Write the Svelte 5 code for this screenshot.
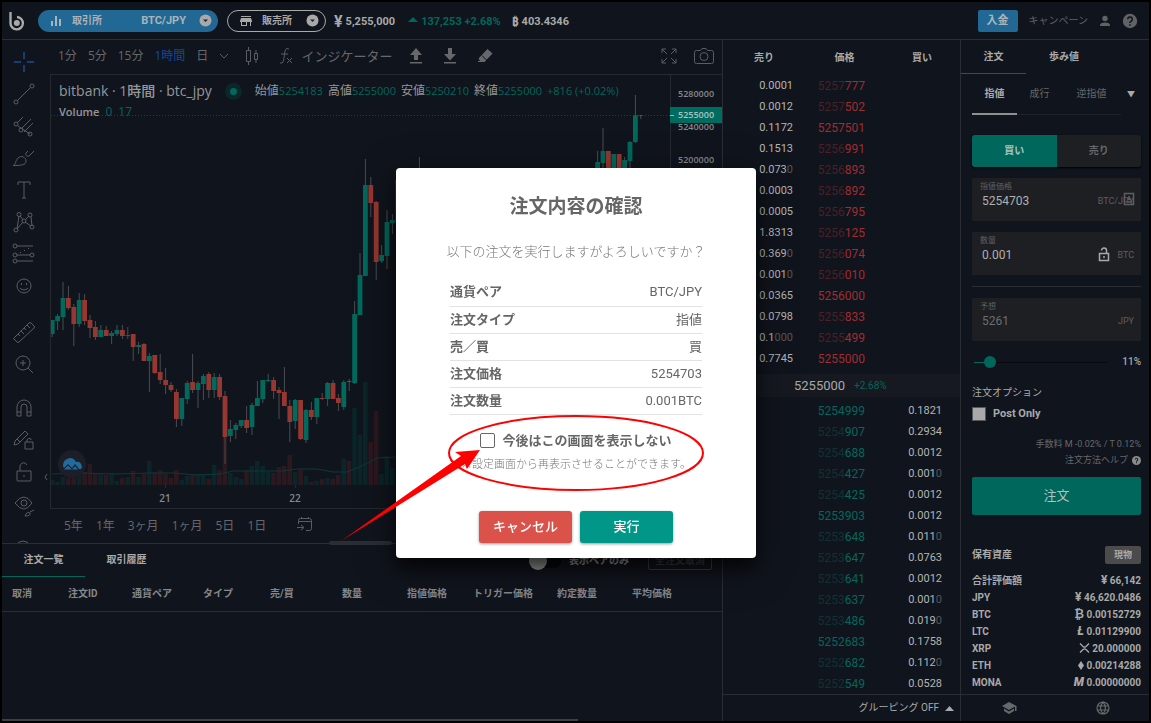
<script>
  // Candle: [body top, body bottom, high, low, direction]
  const candles = [
    [320,334,320,337,'g'],[316,321,314,330,'g'],[298,317,282,330,'g'],[298,308,286,310,'r'],[307,324,304,346,'r'],
    [300,324,293,327,'g'],[300,321,294,325,'r'],[320,328,315,338,'r'],[327,337,321,340,'r'],[330,337,325,337,'g'],
    [330,336,326,336,'r'],[333,336,331,344,'g'],[330,334,325,336,'g'],[330,336,325,339,'r'],[335,336,327,339,'g'],
    [334,347,334,361,'r'],[345,347,342,354,'g'],[344,361,343,361,'r'],[356,361,353,392,'g'],[355,373,355,374,'r'],
    [372,380,354,384,'r'],[380,385,368,394,'r'],[385,390,382,392,'r'],[392,419,389,427,'r'],[398,419,398,426,'g'],
    [383,399,381,404,'g'],[382,390,354,393,'r'],[383,390,381,408,'g'],[376,384,374,400,'g'],[374,390,372,398,'r'],
    [377,390,373,398,'g'],[377,397,374,400,'r'],[396,437,391,464,'r'],[429,436,420,442,'g'],[425,430,423,439,'g'],
    [420,426,420,428,'g'],[420,428,406,433,'r'],[405,427,403,435,'g'],[398,406,381,406,'g'],[380,399,380,403,'g'],
    [380,381,374,382,'g'],[380,391,377,399,'r'],[390,393,387,419,'r'],[392,406,367,406,'r'],[406,422,400,442,'r'],
    [400,421,399,429,'g'],[400,439,400,440,'r'],[410,440,409,443,'g'],[410,417,402,420,'r'],[398,417,398,424,'g'],
    [398,399,393,400,'r'],[383,399,382,406,'g'],[383,399,380,399,'r'],[398,403,394,411,'r'],[382,407,380,410,'g'],
    [381,382,379,391,'r'],[314,383,301,384,'g'],[275,315,253,315,'g'],[185,276,159,276,'g'],[185,203,177,217,'r'],
    [202,262,201,280,'r'],[255,261,245,263,'g'],[222,256,210,269,'g'],[220,223,214,234,'g'],[180,222,179,222,'g']
  ].map((c, i) => ({ x: 52.2 + i * 5.4, c }));

  const recent = [
    [68,[180,200,157,210,'g']],[101,[162,190,151,190,'g']],[102,[151,163,128,180,'g']],[103,[151,172,151,190,'r']],
    [104,[154,175,154,190,'g']],[105,[154,175,154,190,'r']],[106,[160,175,157,190,'g']],[107,[142,161,141,175,'g']],
    [108,[115,142,95,143,'g']],[109,[115,116,115,119,'r']]
  ].map(([i, c]) => ({ x: 52.2 + i * 5.4, c }));

  const all = [...candles, ...recent];

  const volumes = [480,482,477,478,478,475,472,464,474,474,475,473,481,478,477,471,477,474,461,473,470,474,478,470,480,
    476,474,474,475,479,465,470,437,473,477,479,471,466,461,466,472,473,467,466,455,472,470,476,482,481,479,478,479,475,
    459,461,408,435,382,442,411,474,456,468];

  const asks = [
    ['0.0001','','5257','777'],['0.0012','','5257','502'],['0.1172','','','5257501'],['0.1513','','5256','991'],
    ['0.073','0','5256','893'],['0.0003','','5256','892'],['0.0005','','5256','795'],['1.8313','','5256','125'],
    ['0.369','0','5256','074'],['0.001','0','5256','010'],['0.0365','','','5256000'],['0.0798','','5255','833'],
    ['0.1','000','5255','499'],['0.7745','','','5255000']
  ];
  const bids = [
    ['0.1821','','','5254999'],['0.2934','','5254','907'],['0.0012','','5254','688'],['0.001','0','5254','427'],
    ['0.0012','','5254','425'],['0.0012','','','5253903'],['0.011','0','5253','648'],['0.0763','','5253','647'],
    ['0.0012','','5253','641'],['0.001','0','5253','637'],['0.019','0','5253','486'],['0.1758','','','5252683'],
    ['0.112','0','5252','682'],['0.0528','','5252','549']
  ];

  const assets = [
    ['合計評価額','¥','66,142'],['JPY','¥','46,620.0486'],['BTC','₿','0.00152729'],['LTC','Ł','0.01129900'],
    ['XRP','xrp','20.000000'],['ETH','eth','0.00214288'],['MONA','M','0.00000000']
  ];

  const orderCols = [
    ['取消',66],['注文ID',64],['通貨ペア',71],['タイプ',67],['売/買',72],['数量',65],['指値価格',66],['トリガー価格',84],['約定数量',75],['平均価格',0]
  ];

  const confirmRows = [
    ['通貨ペア','BTC/JPY'],['注文タイプ','指値'],['売／買','買'],['注文価格','5254703'],['注文数量','0.001BTC']
  ];

  const ranges = ['5年','1年','3ヶ月','1ヶ月','5日','1日'];
  const axis = [[94,'5280000'],[127,'5240000'],[160,'5200000']];

  const tools = [
    { n: '十字カーソル', on: true, d: 'M14 4v7M14 17v7M4 14h7M17 14h7' },
    { n: 'トレンドライン', d: 'M7.500 20.500L20.500 7.500M4 22a2 2 0 1 0 4 0a2 2 0 1 0-4 0M20 6a2 2 0 1 0 4 0a2 2 0 1 0-4 0' },
    { n: 'ピッチフォーク', d: 'M7 11L13 5M8 14L20 22M11 17L21 7M14 20L23 11M4 12a2 2 0 1 0 4 0a2 2 0 1 0-4 0M9 18a2 2 0 1 0 4 0a2 2 0 1 0-4 0M18 22a2 2 0 1 0 4 0a2 2 0 1 0-4 0' },
    { n: 'ブラシ', d: 'M3 21.500C6 21 5 17 8 14C11 11 16 13 16 17C16 21 11 21.500 3 21.500ZM24 7L19 12C17 13 15 11 16 9L18 7' },
    { n: 'テキスト', d: 'M8 9V6h12v3M14 6v16M12 22h4' },
    { n: 'パターン', d: 'M7 21L9 8M10 8L13 12M15 12L19 8M21 9L22 18M7 21L13 14M15 14L21 18M7 6.500a2 2 0 1 0 4 0a2 2 0 1 0-4 0M18 7a2 2 0 1 0 4 0a2 2 0 1 0-4 0M4 22a2 2 0 1 0 4 0a2 2 0 1 0-4 0M20 19a2 2 0 1 0 4 0a2 2 0 1 0-4 0M12 13a2 2 0 1 0 4 0a2 2 0 1 0-4 0' },
    { n: '予測', d: 'M7 6h16M7 15h13M7 21h16M10 13l1-1M14 11l1-1M18 9l1-1M3 6a2 2 0 1 0 4 0a2 2 0 1 0-4 0M3 15a2 2 0 1 0 4 0a2 2 0 1 0-4 0M3 21a2 2 0 1 0 4 0a2 2 0 1 0-4 0M20 15a2 2 0 1 0 4 0a2 2 0 1 0-4 0' },
    { n: 'アイコン', d: 'M7 14a7 7 0 1 0 14 0a7 7 0 1 0-14 0M10 16q4 4 8 0M11.500 11v2M16.500 11v2' },
    { n: '定規', gap: 14, d: 'M4 20L19 5q1-1 2 0L24 8q1 1 0 2L9 24q-1 1-2 0L4 21q-1 0 0-1M8 16l2 2M11 13l3 3M14 10l2 2M17 7l3 3' },
    { n: 'ズームイン', d: 'M6 13a7 7 0 1 0 14 0a7 7 0 1 0-14 0M18 18l5 5M13 10v6M10 13h6' },
    { n: 'マグネット', gap: 12, d: 'M7 22V13a7 7 0 0 1 14 0V22H17V13a3 3 0 0 0-6 0V22ZM7 18h4M17 18h4' },
    { n: '描画モード', d: 'M5 15L15 5l3 3L8 18l-4 1zM7 13l3 3M15 16h8v7h-8zM17 16v-2q1-3 4-1v1' },
    { n: '描画をロック', d: 'M7 13h14v9q0 1-1 1H8q-1 0-1-1zM10 13V8q1-4 5-3l2 2M14 17v2' },
    { n: '描画を隠す', d: 'M5 13q9-12 17 0q-8 12-17 0M11 13a3 3 0 1 0 6 0a3 3 0 1 0-6 0M15 26q2-5 5-3q1 3-5 3M20 22l4-2' }
  ];

  let side = $state('buy');
  let price = $state('5254703');
  let amount = $state('0.001');
</script>

{#snippet caret()}
  <svg class="caret" width="13" height="13" viewBox="0 0 13 13" aria-hidden="true">
    <circle cx="6.500" cy="6.500" r="6" fill="#a9a9a9" /><path d="M4 5.500h5L6.500 8z" fill="#1b2530" />
  </svg>
{/snippet}

{#snippet bar({ x, c })}
  <rect x={x - 0.5} y={c[2]} width="1" height={c[3] - c[2]} fill="#4b4c4f" />
  <rect x={x - 2.4} y={c[0]} width="4.800" height={c[1] - c[0]} fill={c[4] === 'g' ? '#02695d' : '#963732'} />
{/snippet}

<div class="app">
  <header>
    <svg class="logo" width="17" height="20" viewBox="0 0 17 20" aria-label="bitbank">
      <path d="M1.500 1v11a6.200 6.200 0 1 0 6.500-6" fill="none" stroke="#a9a9a9" stroke-width="2.400" />
      <circle cx="7.800" cy="12" r="3" fill="#a9a9a9" />
    </svg>
    <button class="pill exchange">
      <svg width="12" height="12" viewBox="0 0 12 12" fill="#a9b4ba" aria-hidden="true"><path d="M1 6h2v5H1zM5 1h2v10H5zM9 4h2v7H9z" /></svg>
      <b>取引所</b><span class="pair">BTC/JPY</span>{@render caret()}
    </button>
    <button class="pill shop">
      <svg width="12" height="12" viewBox="0 0 12 12" fill="#a9a9a9" aria-hidden="true"><path d="M1 1h10v1H1zM1 3h10l1 3v1h-1v4h-1V7H7v4H1V7H0V6zM2 7v3h4V7z" /></svg>
      <b>販売所</b>{@render caret()}
    </button>
    <div class="ticker">
      <span class="sym">¥</span><b>5,255,000</b>
      <svg class="up" width="10" height="5" viewBox="0 0 10 5" aria-hidden="true"><path d="M0 5L5 0l5 5z" fill="#00675c" /></svg>
      <b class="teal">137,253 +2.68%</b>
      <span class="sym btc">₿</span><b>403.4346</b>
    </div>
    <nav>
      <button class="deposit">入金</button>
      <a href="#campaign">キャンペーン</a>
      <svg width="14" height="14" viewBox="0 0 14 14" fill="#606266" aria-label="アカウント"><circle cx="7" cy="4.500" r="2.700" /><path d="M2 12v-1.500Q3 8.500 7 8.500t5 2V12z" /></svg>
      <svg width="16" height="16" viewBox="0 0 16 16" aria-label="ヘルプ"><circle cx="8" cy="8" r="7.200" fill="#606266" /><path d="M5.700 6.200a2.300 2.300 0 1 1 3.500 2Q8 9 8 10M8 11.200v1.500" fill="none" stroke="#10141c" stroke-width="1.500" /></svg>
    </nav>
  </header>

  <main>
    <section class="left">
      <div class="chart">
        <div class="tools">
          {#each tools as t}
            <button aria-label={t.n} class:on={t.on} style:margin-top={(t.gap ?? 0) + 'px'}>
              <svg width="28" height="28" viewBox="0 0 28 28" aria-hidden="true"><path d={t.d} /></svg>
            </button>
          {/each}
          <svg class="more-tools" width="28" height="20" viewBox="0 0 28 20" aria-hidden="true"><path d="M9 19.500q5-3 10 0" /></svg>
          <button class="fold" aria-label="ツールバーを隠す"><svg width="4" height="8" viewBox="0 0 4 8"><path d="M3 1L1 4l2 3" /></svg></button>
        </div>
        <div class="pane">
          <div class="bar">
            <div class="times">
              <button>1分</button><button>5分</button><button>15分</button><button class="on">1時間</button><button>日</button>
              <svg width="10" height="6" viewBox="0 0 10 6"><path d="M1 1l4 4 4-4" /></svg>
            </div>
            <button class="ic" aria-label="ローソク足"><svg width="14" height="20" viewBox="0 0 14 20"><path d="M1.500 4.500h4v11h-4zM3.500 1v3M3.500 16v3M9.500 7.500h3v6h-3zM11 4v3M11 14v3" /></svg></button>
            <button class="ind"><svg width="14" height="18" viewBox="0 0 14 18"><path d="M10 2Q7 0 6 4L4.500 14Q3.500 17 1 16M2 7h7M8 11l5 5M13 11l-5 5" /></svg>インジケーター</button>
            <div class="files">
              <svg width="14" height="16" viewBox="0 0 14 16"><path class="f" d="M7 0l6 7H9v5H5V7H1zM1 14h12v1.500H1z" /></svg>
              <svg width="14" height="16" viewBox="0 0 14 16"><path class="f" d="M7 12.500l6-6.500H9V0H5v6H1zM1 14h12v1.500H1z" /></svg>
              <svg width="16" height="16" viewBox="0 0 16 16"><path class="f" d="M10.500 1l5 4.500L7.500 14H1v-1h2L1.500 10.500z" /><path class="cut" d="M5 7.500l4.500 4.500" /></svg>
            </div>
            <div class="right">
              <svg width="16" height="16" viewBox="0 0 16 16"><path d="M1 5V1h4M1 1l5 5M11 1h4v4M15 1l-5 5M1 11v4h4M1 15l5-5M15 11v4h-4M15 15l-5-5" /></svg>
              <svg width="20" height="18" viewBox="0 0 20 18"><path d="M2.500 3.500h4l1.500-2h4l1.500 2h4q2 0 2 2v9q0 2-2 2h-15q-2 0-2-2v-9q0-2 2-2zM6 9.500a4 4 0 1 0 8 0a4 4 0 1 0-8 0" /></svg>
            </div>
          </div>

          <div class="plot">
            <svg class="canvas" role="img" aria-label="btc_jpy 1時間足">
              <g transform="translate(-51 -75)">
                {#each volumes as v, i}
                  <rect x={49.8 + i * 5.4} y={v} width="4.600" height={485 - v} fill={candles[i].c[4] === 'g' ? '#0b2529' : '#2c181f'} />
                {/each}
                <polyline points="52,474 83,473 117,474 150,473 173,473 197,475 220,474 233,471 283,471 297,469 317,469 333,472 347,472 360,467 377,458 397,457 670,457" fill="none" stroke="#0b3a3a" />
                {#each all as b}{@render bar(b)}{/each}
                <path d="M51 115.500H670" stroke="#0a4a47" stroke-dasharray="1 2" />
                <path d="M670.500 75V508M165.500 485v3M295.500 485v3" stroke="#26292f" />
                {#each axis as [y, t]}
                  <text class="ax" x="678" y={y + 3}>{t}</text>
                {/each}
                <rect x="670" y="107" width="52" height="16" fill="#006b5f" />
                <path d="M670 115.500h4" stroke="#a9a9a9" />
                <text class="ax cur" x="678" y="118">5255000</text>
                <text class="day" x="165" y="502">21</text>
                <text class="day" x="295" y="502">22</text>
                <circle cx="72" cy="464" r="14" fill="#1c1f29" />
                <path d="M63 466q0-7 7-8 4 0 6 4 5-1 6 5l-1 2H79l-4-5-3 4-4-4-4 4z" fill="#236a9d" />
                <path d="M64 469.500l4-4 4 4 3-3.500 3 3.500z" fill="#236a9d" />
              </g>
            </svg>
            <div class="legend">
              <div class="l1">
                <span class="name">bitbank <i>·</i> 1時間 <i>·</i> btc_jpy</span><span class="dot"></span>
                <span class="o">始値<em>5254183</em></span><span class="o">高値<em>5255000</em></span><span class="o">安値<em>5250210</em></span><span class="o">終値<em>5255000</em></span><span class="o"><em>+816 (+0.02%)</em></span>
              </div>
              <div class="l2"><span>Volume</span><em>0</em><em>17</em></div>
            </div>
          </div>

          <div class="ranges">
            {#each ranges as r}<button>{r}</button>{/each}
            <svg width="16" height="15" viewBox="0 0 16 15"><path d="M1.500 7V3.500q0-2 2-2h9q2 0 2 2v8q0 2-2 2H9M1.500 4.500h13M4.500 0v2M11.500 0v2M0 10.500h6M4 8l3 2.500L4 13" /></svg>
          </div>
          <span class="grip"></span>
        </div>
      </div>

      <div class="orders">
        <div class="otabs">
          <button class="on">注文一覧</button><button>取引履歴</button>
          <div class="opts">
            <label class="tog"><input type="checkbox" role="switch" />表示ペアのみ</label>
            <button class="all">全注文取消</button>
          </div>
        </div>
        <table>
          <colgroup>{#each orderCols as [, w]}<col style:width={w ? w + 'px' : 'auto'} />{/each}</colgroup>
          <thead><tr>{#each orderCols as [c]}<th>{c}</th>{/each}</tr></thead>
        </table>
        <span class="hscroll"></span>
      </div>
    </section>

    <section class="book">
      <table class="head"><thead><tr><th>売り</th><th>価格</th><th>買い</th></tr></thead></table>
      <table class="asks"><tbody>
        {#each asks as [a, z, p, q]}
          <tr><td class="am">{a}<i>{z}</i></td><td class="pr"><i>{p}</i>{q}</td><td></td></tr>
        {/each}
      </tbody></table>
      <div class="mid"><span>5255000</span><small>+2.68%</small></div>
      <div class="bidwrap"><table class="bids"><tbody>
        {#each bids as [a, z, p, q]}
          <tr><td></td><td class="pr"><i>{p}</i>{q}</td><td class="am">{a}<i>{z}</i></td></tr>
        {/each}
      </tbody></table></div>
      <button class="group">グルーピング OFF <svg width="9" height="5" viewBox="0 0 9 5"><path d="M0 5L4.500 0 9 5z" fill="#a9a9a9" /></svg></button>
    </section>

    <aside>
      <div class="ptabs"><button class="on">注文</button><button>歩み値</button></div>
      <div class="panel">
        <div class="types"><button class="on">指値</button><button>成行</button><button>逆指値</button><button class="more" aria-label="その他">▼</button></div>
        <div class="sides">
          <button class:on={side === 'buy'} onclick={() => (side = 'buy')}>買い</button>
          <button class:on={side === 'sell'} onclick={() => (side = 'sell')}>売り</button>
        </div>
        <div class="field">
          <label for="price">指値価格</label>
          <div><input id="price" bind:value={price} /><span>BTC/JPY</span></div>
          <svg class="card" width="12" height="14" viewBox="0 0 12 14" aria-hidden="true"><path d="M1.500 1.500h9v11h-9zM3 10h6M6 4v4M4 7h4" fill="none" stroke="#5d5e60" stroke-width="1.500" /></svg>
        </div>
        <div class="field">
          <label for="amount">数量</label>
          <div><input id="amount" bind:value={amount} />
            <svg width="12" height="15" viewBox="0 0 12 15" aria-hidden="true"><path d="M1.500 6.500h9v7h-9zM3.500 3.500a2.500 2.500 0 0 1 5 0V6M6 9v2" fill="none" stroke="#a9a9a9" stroke-width="1.500" /></svg><span>BTC</span></div>
        </div>
        <hr />
        <div class="field off">
          <label for="est">予想</label>
          <div><input id="est" value="5261" readonly /><span>JPY</span></div>
        </div>
        <div class="slide"><input type="range" min="0" max="140" value="11" aria-label="割合" /><output>11%</output></div>
        <p class="opt">注文オプション</p>
        <label class="post"><input type="checkbox" />Post Only</label>
        <p class="fee">手数料 M -0.02% / T 0.12%</p>
        <a class="fee help" href="#help">注文方法ヘルプ <svg width="9" height="9" viewBox="0 0 16 16"><circle cx="8" cy="8" r="8" fill="#8a8b8d" /><path d="M5.700 6.200a2.300 2.300 0 1 1 3.500 2Q8 9 8 10M8 11.200v1.800" fill="none" stroke="#10141c" stroke-width="1.800" /></svg></a>
        <button class="submit">注文</button>
        <div class="ah"><h2>保有資産</h2><button>現物</button></div>
        <table class="assets"><tbody>
          {#each assets as [n, s, v]}
            <tr><th>{n}</th><td>
              {#if s === 'xrp'}<svg width="11" height="10" viewBox="0 0 11 10"><path d="M1 .5l3 3q1.500 1.300 3 0l3-3M1 9.500l3-3q1.500-1.300 3 0l3 3" fill="none" stroke="#a9a9a9" stroke-width="1.300" /></svg>
              {:else if s === 'eth'}<svg width="6" height="9" viewBox="0 0 6 9"><path d="M3 0l3 4.500L3 9 0 4.500z" fill="#a9a9a9" /></svg>
              {:else}<span class="unit" class:slant={s === 'Ł' || s === 'M'}>{s}</span>{/if} {v}</td></tr>
          {/each}
        </tbody></table>
      </div>
      <footer>
        <svg width="16" height="14" viewBox="0 0 16 14" aria-label="学習"><path d="M8 1L1 5l7 4 6-3.400V10h1.500V5zM3 7.500V10l5 3 5-3V7.500L8 10.500z" fill="#66686b" /></svg>
        <svg width="14" height="14" viewBox="0 0 14 14" aria-label="言語"><path d="M1 7a6 6 0 1 0 12 0a6 6 0 1 0-12 0M1 5h12M1 9h12M7 1q-5 6 0 12M7 1q5 6 0 12" fill="none" stroke="#66686b" stroke-width="1.200" /></svg>
      </footer>
    </aside>
  </main>

  <div class="overlay">
    <form class="modal" role="dialog" aria-labelledby="mt" onsubmit={(e) => e.preventDefault()}>
      <h1 id="mt">注文内容の確認</h1>
      <p class="ask">以下の注文を実行しますがよろしいですか？</p>
      <table><tbody>
        {#each confirmRows as [k, v]}<tr><th>{k}</th><td>{v}</td></tr>{/each}
      </tbody></table>
      <label class="skip"><input type="checkbox" />今後はこの画面を表示しない</label>
      <p class="note">※設定画面から再表示させることができます。</p>
      <div class="acts"><button type="button" class="cancel">キャンセル</button><button class="ok">実行</button></div>
      <svg class="mark" aria-hidden="true">
        <ellipse cx="180" cy="285" rx="127" ry="37" fill="none" stroke="#f00" stroke-width="2" />
        <path d="M-55 373L65 288 59 284 84 282 71 301 69 296z" fill="#f00" />
      </svg>
    </form>
  </div>
</div>

<style>
  :global(body) { margin: 0; background: #000; }
  .app { box-sizing: border-box; min-height: 100vh; border: 2px solid #000; background: #10141c; color: #a9a9a9; display: flex; flex-direction: column; font: 10px/14px Roboto, "Noto Sans CJK JP", sans-serif; }
  .app :global(*) { box-sizing: border-box; }
  button, input { font: inherit; color: inherit; background: none; border: 0; padding: 0; margin: 0; white-space: nowrap; }
  button { cursor: pointer; }
  a { color: inherit; text-decoration: none; }
  p, h1, h2 { margin: 0; }
  i, em { font-style: normal; }
  svg { display: block; flex: none; }
  table { border-collapse: collapse; }
  th, td { padding: 0; }
  .teal { color: #00675c; }

  header { height: 38px; border-bottom: 1px solid #2a2d34; display: flex; align-items: center; padding: 0 11px 0 7px; }
  .logo { margin-right: 12px; }
  .pill { height: 22px; border-radius: 11px; display: flex; align-items: center; padding: 0 6px 0 12px; }
  .pill b { margin-left: 10px; }
  .exchange { width: 180px; background: #226894; color: #a9b4ba; }
  .shop { width: 99px; border: 1px solid #a9a9a9; margin-left: 9px; }
  .pair { margin-left: auto; font-size: 11px; font-weight: 700; }
  .exchange .caret { margin-left: 13px; }
  .shop .caret { margin-left: auto; }
  .ticker { display: flex; align-items: center; margin: 2px 0 0 8px; font-size: 11px; }
  .sym { font-size: 16px; font-weight: 700; margin-right: 3px; }
  .sym.btc { font-size: 12px; margin-left: 11px; font-family: "Noto Sans", sans-serif; }
  .up { margin: 0 3px 4px 13px; }
  nav { margin-left: auto; display: flex; align-items: center; gap: 11px; color: #606266; }
  .deposit { background: #226894; color: #a9b4ba; font-size: 11px; font-weight: 700; width: 40px; height: 22px; border-radius: 2px; }
  nav svg:first-of-type { margin: 0 -1px; }

  main { flex: 1; display: grid; grid-template-columns: minmax(0, 1fr) 238px 189px; }
  .left { display: flex; flex-direction: column; min-width: 0; }
  .chart { flex: 1; display: flex; min-height: 0; color: #66686d; }
  .tools { width: 48px; padding-top: 6px; display: flex; flex-direction: column; position: relative; }
  .tools button { height: 32px; display: flex; align-items: center; padding-left: 8px; }
  .tools path, .bar path, .ranges path { fill: none; stroke: #5b5d62; stroke-width: 1; }
  .tools .on path { stroke: #143f70; stroke-width: 2; }
  .tools .fold { position: absolute; right: 2px; bottom: 50px; }
  .more-tools { margin: auto 0 0 7px; }
  .bar path.f { fill: #66686b; stroke: none; }
  .bar path.cut { stroke: #10141c; }
  .pane { flex: 1; min-width: 0; display: flex; flex-direction: column; position: relative; }
  .bar { height: 34px; display: flex; align-items: center; padding: 0 8px 2px; font-size: 12px; font-family: "Open Sans", "Noto Sans CJK JP", sans-serif; }
  .times { display: flex; align-items: center; gap: 11px; margin-right: 16px; }
  .times .on { color: #14489a; }
  .ic { margin-right: 20px; }
  .ind { display: flex; align-items: center; gap: 8px; font-size: 13px; }
  .files { display: flex; gap: 20px; margin-left: 17px; }
  .bar .right { margin-left: auto; display: flex; align-items: center; gap: 17px; }
  .plot { flex: 1; position: relative; border: 1px solid #26292f; border-right: 0; min-height: 434px; }
  .canvas { position: absolute; inset: 0; width: 100%; height: 100%; }
  .ax { font: 600 9px "Open Sans", sans-serif; fill: #85888e; }
  .ax.cur { fill: #a9c4c0; }
  .day { font: 600 10px "Open Sans", sans-serif; fill: #85888e; text-anchor: middle; }
  .legend { position: relative; padding: 6px 8px; font-family: "Open Sans", "Noto Sans CJK JP", sans-serif; color: #96979b; white-space: nowrap; }
  .legend em { color: #00675c; }
  .l1 { display: flex; align-items: center; height: 20px; font-size: 12px; }
  .l1 em { font-size: 11px; }
  .name { font-size: 14px; font-weight: 500; }
  .dot { width: 7px; height: 7px; border-radius: 50%; background: #00695e; box-shadow: 0 0 0 5px #0d2629; margin: 0 18px; }
  .o { margin-right: 5px; }
  .l2 { display: flex; gap: 6px; font-size: 12px; line-height: 22px; }
  .l2 span { font-size: 11px; font-weight: 600; }
  .ranges { height: 34px; display: flex; align-items: center; gap: 13px; padding: 0 0 3px 14px; font: 12px "Open Sans", "Noto Sans CJK JP", sans-serif; }
  .ranges svg { margin-left: 18px; }
  .grip { position: absolute; left: 279px; bottom: -2px; width: 63px; height: 4px; border-radius: 2px; background: #2b2e34; }

  .orders { height: 178px; border-top: 1px solid #2a2d34; position: relative; font-weight: 700; }
  .otabs { height: 33px; display: flex; }
  .otabs > button { width: 83px; border-bottom: 1px solid transparent; }
  .otabs > .on { border-color: #00675c; }
  .opts { margin-left: auto; display: flex; align-items: center; padding-right: 10px; }
  .tog { display: flex; align-items: center; gap: 8px; }
  .tog input { appearance: none; width: 32px; height: 14px; border-radius: 7px; background: #07090d; position: relative; }
  .tog input::before { content: ""; position: absolute; left: 0; top: -2px; width: 18px; height: 18px; border-radius: 50%; background: #a0a0a0; }
  .all { border: 1px solid #3d4046; border-radius: 2px; color: #3d4046; width: 64px; height: 19px; margin-left: 19px; }
  .orders table { width: 100%; table-layout: fixed; }
  .orders th { height: 34px; text-align: left; color: #85878b; border-bottom: 1px solid #2a2d34; white-space: nowrap; }
  .orders th:first-child { padding-left: 10px; }
  .hscroll { position: absolute; left: 0; bottom: 0; width: 80%; height: 2px; background: #3d3f43; }

  .book { border-left: 1px solid #2a2d34; display: flex; flex-direction: column; min-width: 0; }
  .book table { width: 100%; table-layout: fixed; }
  .head th { height: 35px; }
  .head th:first-child { width: 82px; }
  .head th:last-child { width: 76px; }
  .asks, .bids { font-size: 11px; }
  .book td { height: 21px; }
  .am { text-align: right; width: 70px; color: #b4b4b4; }
  .asks td:last-child { width: 95px; }
  .bids td:first-child { width: 70px; }
  .bids td:last-child { width: 95px; padding-right: 18px; }
  .am i { color: #55575b; }
  .pr { text-align: right; font-size: 12px; }
  .asks .pr { color: #a02d31; }
  .asks .pr i { color: #4b2027; }
  .bids .pr { color: #02675c; }
  .bids .pr i { color: #103234; }
  .mid { height: 23px; margin: 5px 0 3px; background: #161920; display: flex; align-items: center; gap: 9px; padding-left: 71px; font-size: 13px; }
  .mid small { font-size: 10px; color: #00675c; }
  .bidwrap { flex: 1; overflow: hidden; height: 0; }
  .group { height: 27px; border-top: 1px solid #2a2d34; display: flex; align-items: center; justify-content: flex-end; gap: 6px; padding-right: 6px; }

  aside { border-left: 1px solid #2a2d34; display: flex; flex-direction: column; min-width: 0; }
  .ptabs { height: 34px; display: flex; font-weight: 700; }
  .ptabs button { width: 65px; border-bottom: 1px solid transparent; }
  .ptabs button + button { width: 76px; }
  .ptabs .on { border-color: #00675c; }
  .panel { flex: 1; padding: 0 8px 0 11px; }
  .types { height: 41px; display: flex; color: #66686c; }
  .types button { width: 45px; border-bottom: 1px solid #1f2228; }
  .types button:nth-child(3) { width: 59px; }
  .types .on { color: #a9a9a9; font-weight: 700; border-bottom: 2px solid #8f9093; }
  .types .more { width: 20px; border: 0; color: #a9a9a9; font-size: 8px; }
  .sides { display: grid; grid-template-columns: 1fr 1fr; height: 32px; margin: 20px 0 11px; border-radius: 3px; overflow: hidden; background: #1d1f23; color: #66686c; font-weight: 700; box-shadow: 0 1px 2px #000; }
  .sides .on { background: #00675c; color: #a9c4c0; }
  .field { height: 43px; background: #1d1f23; margin-bottom: 11px; padding: 2px 7px 0 8px; position: relative; color: #5d5e60; }
  .field label { display: block; font-size: 8px; line-height: 13px; }
  .field div { display: flex; align-items: center; height: 15px; gap: 7px; padding-left: 2px; }
  .field input { flex: 1; min-width: 0; font-size: 12px; color: #b0b0b0; outline: 0; }
  .field.off input { color: #6c6d70; }
  .field span { font-size: 9px; }
  .card { position: absolute; right: 6px; top: 14px; }
  hr { border: 0; border-top: 1px solid #2a2d34; margin: 0 0 11px; }
  .slide { display: flex; align-items: center; justify-content: space-between; height: 20px; padding-left: 2px; font-weight: 500; }
  .slide input { appearance: none; width: 133px; height: 12px; outline: 0; background: linear-gradient(90deg, #00675c 12%, #08090c 12%) center / 100% 1px no-repeat; }
  .slide input::-webkit-slider-thumb { appearance: none; width: 12px; height: 12px; border-radius: 50%; background: #00675c; }
  .opt { margin-top: 14px; }
  .post { display: flex; align-items: center; gap: 7px; font-size: 11px; font-weight: 700; margin-top: 6px; height: 16px; }
  .post input { appearance: none; width: 14px; height: 14px; background: #a9a9a9; border: 1px solid #55575b; }
  .fee { display: flex; justify-content: flex-end; align-items: center; gap: 4px; font-size: 9px; line-height: 16px; color: #66686c; }
  p.fee { margin-top: 14px; }
  .submit { display: block; width: 100%; height: 38px; background: #00675c; color: #a9c4c0; border-radius: 2px; font-size: 13px; margin: 9px 0 31px; }
  .ah { display: flex; justify-content: space-between; align-items: center; height: 18px; margin-bottom: 8px; }
  .ah h2 { font-size: 10px; }
  .ah button { width: 36px; height: 18px; border-radius: 2px; background: #4b4b4b; font-weight: 700; font-size: 9px; }
  .assets { width: 100%; font-weight: 700; }
  .assets th { text-align: left; }
  .assets td { text-align: right; height: 17px; }
  .assets svg { display: inline-block; vertical-align: -1px; }
  .unit { font-size: 12px; line-height: 12px; }
  .slant { font-style: italic; font-weight: 900; }
  footer { height: 27px; border-top: 1px solid #2a2d34; display: flex; align-items: center; justify-content: space-around; }

  .overlay { position: fixed; inset: 0; display: flex; align-items: center; justify-content: center; padding: 3px 0 0 1px; }
  .modal { position: relative; width: 360px; min-height: 390px; background: #fff; border-radius: 4px; color: #666; padding: 25px 54px 15px; box-shadow: 0 11px 15px #0008, 0 9px 40px #0006; display: flex; flex-direction: column; align-items: center; font-size: 13px; }
  .modal h1 { font-size: 19px; line-height: 28px; font-weight: 700; }
  .ask { margin-top: 22px; line-height: 18px; white-space: nowrap; color: #777; font-weight: 300; }
  .modal table { width: 100%; margin-top: 18px; }
  .modal th { text-align: left; font-weight: 700; }
  .modal td { text-align: right; }
  .modal tr { height: 27px; border-bottom: 1px solid #e2e2e2; }
  .skip { display: flex; align-items: center; gap: 7px; margin-top: 16px; height: 20px; font-weight: 700; white-space: nowrap; }
  .skip input { appearance: none; width: 15px; height: 15px; border: 1px solid #666; border-radius: 2px; background: #fff; }
  .note { font-size: 11px; line-height: 16px; margin-top: 6px; white-space: nowrap; color: #777; font-weight: 300; }
  .acts { display: flex; gap: 8px; margin-top: auto; }
  .acts button { width: 93px; height: 32px; border-radius: 3px; color: #fff; font-weight: 500; box-shadow: 0 1px 3px #0006; }
  .cancel { background: #db524b; }
  .ok { background: #009688; }
  .mark { position: absolute; inset: 0; width: 100%; height: 100%; overflow: visible; pointer-events: none; }
</style>
